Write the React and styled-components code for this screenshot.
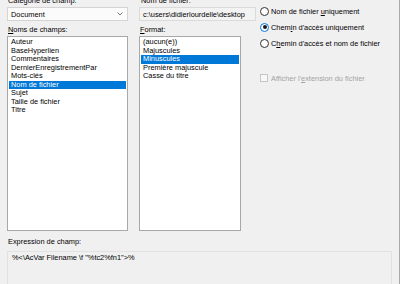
import React, { useState } from 'react'
import styled, { createGlobalStyle } from 'styled-components'

const Global = createGlobalStyle`
  html, body {
    margin: 0;
    padding: 0;
    background: #f0f0f0;
  }
`

const Dialog = styled.div`
  width: 400px;
  height: 284px;
  overflow: hidden;
  box-sizing: border-box;
  background: #f0f0f0;
  border-right: 1px solid #a9a9a9;
  padding-left: 7px;
  display: flex;
  flex-direction: column;
  font-family: 'Liberation Sans', Arial, sans-serif;
  font-size: 7.4px;
  color: #000;
`

const Top = styled.div`
  display: grid;
  grid-template-columns: 121px 102px 1fr;
  column-gap: 11px;
  margin-top: -4px;
`

const Column = styled.div`
  display: flex;
  flex-direction: column;
`

const Label = styled.div`
  height: 9px;
  line-height: 9px;
  padding-left: ${p => p.$indent || 1}px;
  margin-top: ${p => p.$gap || 0}px;
  white-space: nowrap;
`

const Key = styled.span`
  text-decoration: underline;
  text-underline-offset: 1px;
`

const Combo = styled.div`
  margin-top: 2px;
  height: 14px;
  box-sizing: border-box;
  border: 1px solid #d4d4d4;
  background: #fbfbfb;
  display: flex;
  align-items: center;
  justify-content: space-between;
  padding: 0 4px 0 3px;
`

const Field = styled.div`
  margin-top: 2px;
  height: 14px;
  width: 117px;
  box-sizing: border-box;
  border: 1px solid #dadada;
  background: #f3f3f3;
  display: flex;
  align-items: center;
  padding-left: 3px;
  white-space: nowrap;
  overflow: hidden;
`

const List = styled.div`
  margin-top: 2px;
  height: 195px;
  box-sizing: border-box;
  border: 1px solid #a8a8a8;
  background: #fff;
  padding: 1px 1px 0;
`

const Item = styled.div`
  height: 8.5px;
  line-height: 8.5px;
  padding-left: 2px;
  white-space: nowrap;
  background: ${p => (p.$selected ? '#0078d7' : 'transparent')};
  color: ${p => (p.$selected ? '#fff' : '#000')};
`

const Options = styled.div`
  display: flex;
  flex-direction: column;
  padding: 7px 0 0 8px;
`

const Option = styled.label`
  height: 16px;
  display: flex;
  align-items: center;
  gap: 2px;
  white-space: nowrap;
  color: ${p => (p.$disabled ? '#a3a3a3' : '#000')};
  margin-top: ${p => p.$gap || 0}px;
`

const Radio = styled.span`
  width: 9px;
  height: 9px;
  box-sizing: border-box;
  border-radius: 50%;
  border: 1px solid ${p => (p.$on ? '#0078d7' : '#333')};
  background: #fff;
  display: flex;
  align-items: center;
  justify-content: center;
  &::after {
    content: '';
    width: 4px;
    height: 4px;
    border-radius: 50%;
    background: ${p => (p.$on ? '#1a1a1a' : 'transparent')};
  }
`

const Check = styled.span`
  width: 8px;
  height: 8px;
  box-sizing: border-box;
  border: 1px solid #c6c6c6;
  background: #f7f7f7;
  margin-right: 1px;
`

const Bottom = styled.div`
  display: flex;
  flex-direction: column;
  margin-top: 6px;
`

const Expression = styled.div`
  margin-top: 5px;
  width: 385px;
  height: 40px;
  box-sizing: border-box;
  border: 1px solid #e2e2e2;
  padding: 1px 4px;
  line-height: 9px;
  white-space: nowrap;
`

const Chevron = () => (
  <svg width="6" height="4" viewBox="0 0 6 4">
    <polyline points="0.5,0.5 3,3 5.5,0.5" fill="none" stroke="#555" strokeWidth="0.8" />
  </svg>
)

const fields = [
  'Auteur',
  'BaseHyperlien',
  'Commentaires',
  'DernierEnregistrementPar',
  'Mots-clés',
  'Nom de fichier',
  'Sujet',
  'Taille de fichier',
  'Titre',
]

const formats = ['(aucun(e))', 'Majuscules', 'Minuscules', 'Première majuscule', 'Casse du titre']

const App = () => {
  const [field, setField] = useState('Nom de fichier')
  const [format, setFormat] = useState('Minuscules')
  const [mode, setMode] = useState(1)

  return (
    <Dialog>
      <Global />
      <Top>
        <Column>
          <Label>Catégorie de champ:</Label>
          <Combo>
            <span>Document</span>
            <Chevron />
          </Combo>
          <Label $gap={4}>
            <Key>N</Key>oms de champs:
          </Label>
          <List>
            {fields.map(f => (
              <Item key={f} $selected={f === field} onClick={() => setField(f)}>
                {f}
              </Item>
            ))}
          </List>
        </Column>

        <Column>
          <Label $indent={2}>Nom de fichier:</Label>
          <Field>c:\users\didierlourdelle\desktop</Field>
          <Label $gap={4}>
            <Key>F</Key>ormat:
          </Label>
          <List>
            {formats.map(f => (
              <Item key={f} $selected={f === format} onClick={() => setFormat(f)}>
                {f}
              </Item>
            ))}
          </List>
        </Column>

        <Options>
          <Option onClick={() => setMode(0)}>
            <Radio $on={mode === 0} />
            <span>
              Nom de fichier <Key>u</Key>niquement
            </span>
          </Option>
          <Option onClick={() => setMode(1)}>
            <Radio $on={mode === 1} />
            <span>
              Chem<Key>i</Key>n d'accès uniquement
            </span>
          </Option>
          <Option onClick={() => setMode(2)}>
            <Radio $on={mode === 2} />
            <span>
              C<Key>h</Key>emin d'accès et nom de fichier
            </span>
          </Option>
          <Option $disabled $gap={19}>
            <Check />
            <span>
              Afficher l'<Key>e</Key>xtension du fichier
            </span>
          </Option>
        </Options>
      </Top>

      <Bottom>
        <Label>Expression de champ:</Label>
        <Expression>%&lt;\AcVar Filename \f "%tc2%fn1"&gt;%</Expression>
      </Bottom>
    </Dialog>
  )
}

export default App
